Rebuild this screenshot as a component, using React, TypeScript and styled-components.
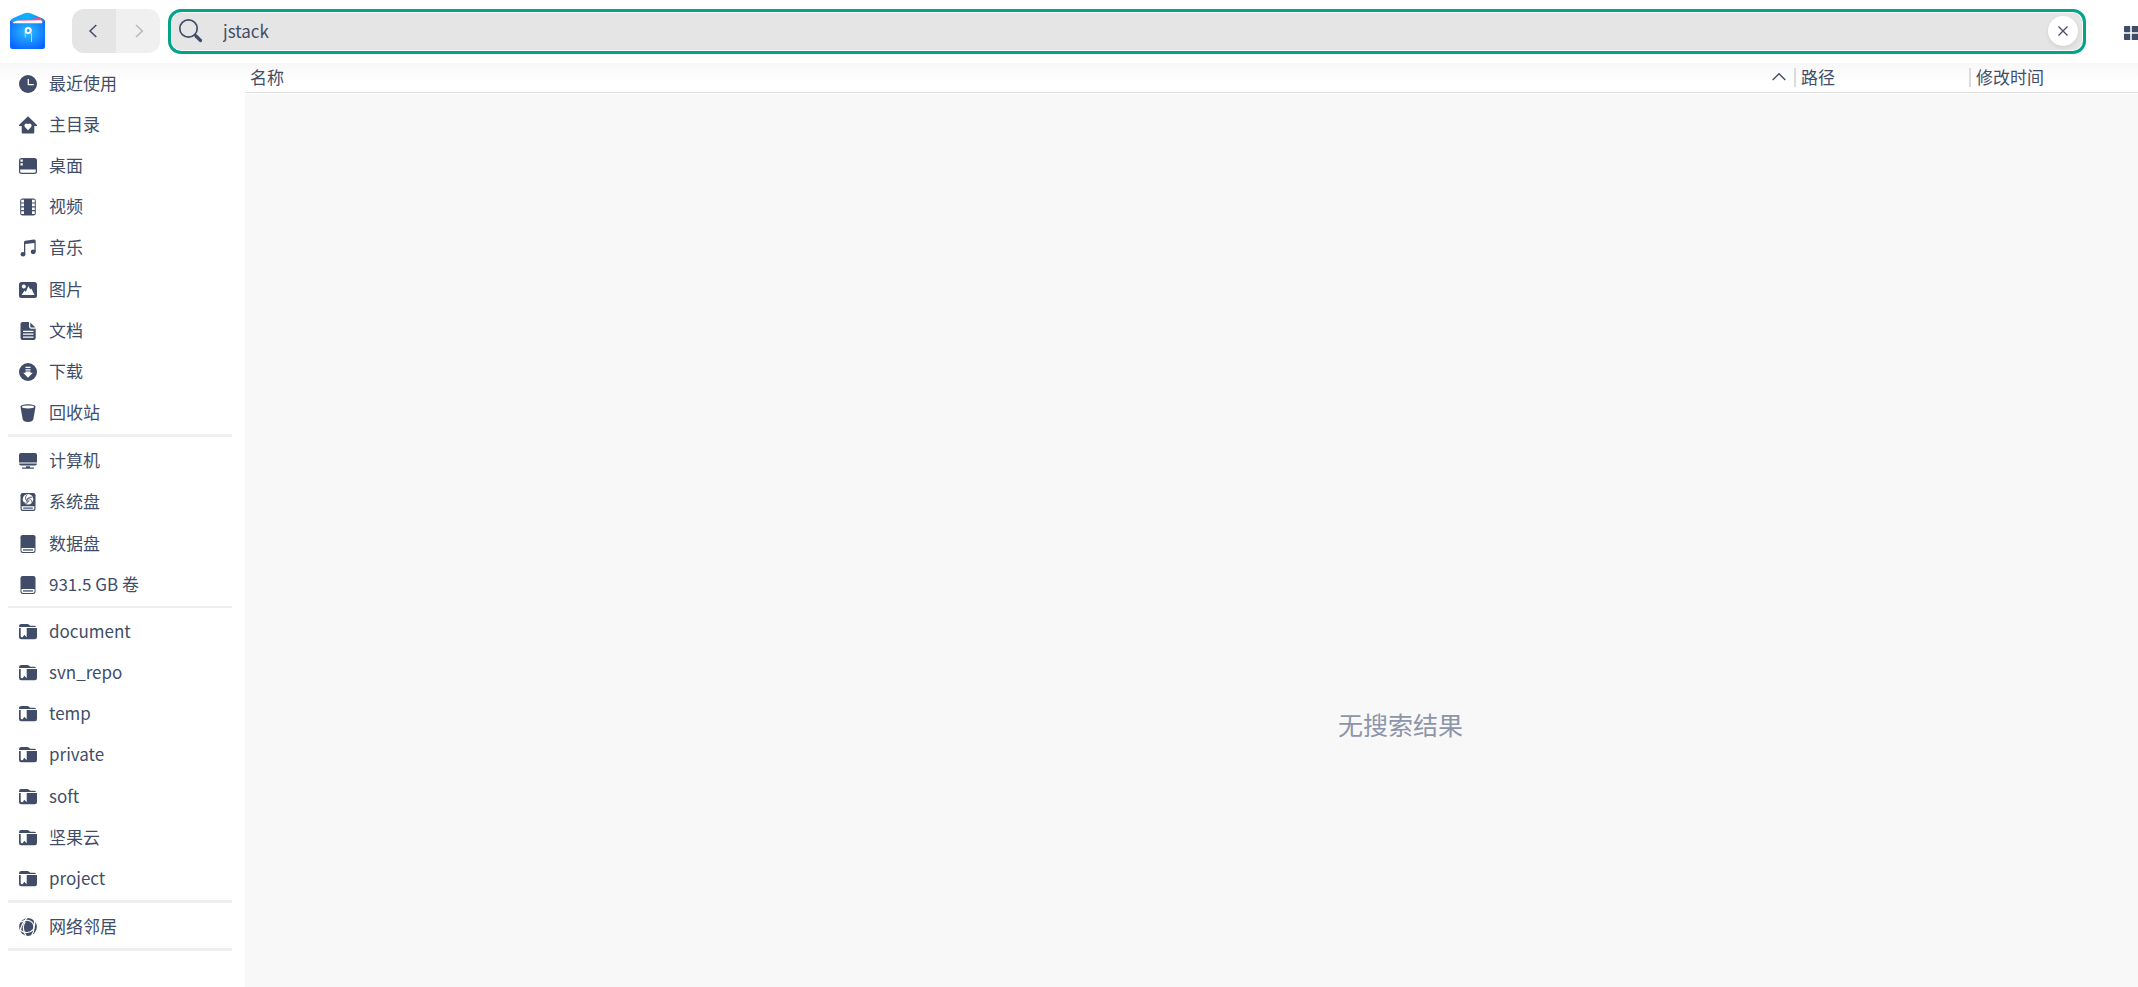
import React from "react";
import styled, { createGlobalStyle } from "styled-components";

const ink = "#414d68";
const uiFont = '"Noto Sans CJK SC", "Noto Sans", sans-serif';

const GlobalStyle = createGlobalStyle`
  * { box-sizing: border-box; }
  body {
    margin: 0;
    background: #fff;
    color: ${ink};
    font-family: ${uiFont};
    font-size: 17px;
    line-height: 24px;
    overflow: hidden;
  }
  button, input { font: inherit; color: inherit; }
`;

const Window = styled.div`
  display: flex;
  flex-direction: column;
  height: 100vh;
  overflow: hidden;
`;

const TitleBar = styled.header`
  display: flex;
  flex: none;
  align-items: center;
  height: 63px;
  padding: 0 0 1px 9px;
`;

const NavGroup = styled.nav`
  display: flex;
  flex: none;
  height: 44px;
  margin: 0 8px 0 26px;
  border-radius: 12px;
  overflow: hidden;
`;

const NavButton = styled.button`
  display: flex;
  align-items: center;
  justify-content: center;
  width: 44px;
  padding: 0 2px 0 0;
  border: 0;
  background: #e5e5e5;
  color: ${ink};
  &:disabled {
    padding: 0 0 0 2px;
    background: #f0f0f0;
    color: #b3b8c3;
  }
`;

const SearchBox = styled.form`
  display: flex;
  flex: 1;
  align-items: center;
  gap: 19px;
  height: 45px;
  margin-right: 38px;
  padding: 0 5px 0 7px;
  border: 3px solid #00a489;
  border-radius: 13px;
  background: #e5e5e5;
  box-shadow: inset 0 0 0 1px #fafafa;
`;

const SearchInput = styled.input`
  flex: 1;
  min-width: 0;
  padding: 0;
  border: 0;
  outline: 0;
  background: transparent;
`;

const ClearButton = styled.button`
  display: flex;
  align-items: center;
  justify-content: center;
  width: 30px;
  height: 30px;
  padding: 0;
  border: 0;
  border-radius: 50%;
  background: #fff;
  box-shadow: 0 2px 4px rgba(0, 0, 0, 0.09);
`;

const ViewButton = styled.button`
  display: flex;
  flex: none;
  width: 14px;
  padding: 4px 0 0;
  border: 0;
  background: none;
  overflow: hidden;
`;

const Body = styled.div`
  display: flex;
  flex: 1;
  min-height: 0;
  background: linear-gradient(#f7f7f7, #fff 18px);
`;

const Sidebar = styled.aside`
  display: flex;
  flex: none;
  flex-direction: column;
  gap: 3px;
  width: 245px;
  overflow: hidden;
`;

const Group = styled.ul<{ $height: number; $thin?: boolean }>`
  display: grid;
  flex: none;
  grid-auto-rows: 1fr;
  list-style: none;
  height: ${(p) => p.$height}px;
  margin: 0 13px 0 8px;
  padding: 0;
  border-bottom: ${(p) => (p.$thin ? 2 : 3)}px solid #efefef;
`;

const Place = styled.a`
  display: flex;
  align-items: center;
  gap: 12px;
  height: 100%;
  padding-left: 11px;
  color: inherit;
  text-decoration: none;
  white-space: nowrap;
`;

const PlaceLabel = styled.span`
  padding-bottom: 2px;
`;

const Main = styled.main`
  display: flex;
  flex: 1;
  flex-direction: column;
  min-width: 0;
`;

const ColumnBar = styled.div`
  display: flex;
  flex: none;
  align-items: center;
  height: 30px;
  border-bottom: 1px solid #dfdfdf;
  margin-bottom: 1px;
`;

const Column = styled.button<{ $width?: number }>`
  display: flex;
  flex: ${(p) => (p.$width ? `0 0 ${p.$width}px` : "1")};
  align-items: center;
  justify-content: space-between;
  height: 19px;
  padding: 0 8px 2px 5px;
  border: 0;
  border-left: ${(p) => (p.$width ? "2px solid #dcdcdc" : "0")};
  background: none;
  text-align: left;
`;

const Results = styled.section`
  display: flex;
  flex: 1;
  align-items: center;
  justify-content: center;
  padding: 366px 0 0 418px;
  background: #f8f8f8;
  color: #8d96a9;
  font-size: 25px;
  line-height: 36px;
`;

const Glyph = ({ children }: { children: React.ReactNode }) => (
  <svg width="18" height="18" viewBox="0 0 18 18" fill={ink} aria-hidden="true">
    {children}
  </svg>
);

const icons = {
  recent: (
    <Glyph>
      <circle cx="9" cy="9" r="9" />
      <path d="M9.300 4v5.700h5.500" fill="none" stroke="#fff" strokeWidth="1.300" />
    </Glyph>
  ),
  home: (
    <Glyph>
      <path d="M9 .3 18 9v1h-2.700v6.600a1 1 0 0 1-1 1H3.700a1 1 0 0 1-1-1V10H0V9z" />
      <path d="M9 14.200 5.900 11a2 2 0 0 1 3.100-2.700A2 2 0 0 1 12.100 11z" fill="#fff" />
    </Glyph>
  ),
  desktop: (
    <Glyph>
      <rect y="1" width="18" height="16" rx="2.500" />
      <path d="M1.200 12.600h15.600v1.800a1.400 1.400 0 0 1-1.400 1.400H2.600a1.400 1.400 0 0 1-1.400-1.400z" fill="#fff" />
      <path d="M1.400 2.600h2.400v2.200H1.400zM1.400 6.200h2.400v2.200H1.400z" fill="#fff" />
    </Glyph>
  ),
  video: (
    <Glyph>
      <rect x="1.200" y=".5" width="15.600" height="17" rx="2.200" />
      <path
        d="M2.200 1.800h2.800v2.600H2.200zM2.200 5.600h2.800v2.600H2.200zM2.200 9.400h2.800V12H2.200zM2.200 13.200h2.800v2.800H2.200zM13 1.800h2.800v2.600H13zM13 5.600h2.800v2.600H13zM13 9.400h2.800V12H13zM13 13.200h2.800v2.800H13z"
        fill="#fff"
      />
    </Glyph>
  ),
  music: (
    <Glyph>
      <path d="M5 15V3.200A1.500 1.500 0 0 1 6.300 1.700l8.700-1.200a1.500 1.500 0 0 1 1.700 1.500V13h-1.300V4L6.300 5v10z" />
      <ellipse cx="4" cy="15.200" rx="2.400" ry="2.300" />
      <ellipse cx="14.200" cy="12.800" rx="2.500" ry="2.400" />
    </Glyph>
  ),
  picture: (
    <Glyph>
      <rect y="1" width="18" height="16" rx="2.500" />
      <circle cx="4.800" cy="5.600" r="2" fill="#fff" />
      <path d="M2.600 14 5.600 9.600l1.300 1.300L9.300 5l2 3.600 1-1.100L15.600 14z" fill="#fff" />
    </Glyph>
  ),
  text: (
    <Glyph>
      <path d="M3.500 0H10v4.600A2 2 0 0 0 12 6.700h4.700V16a2 2 0 0 1-2 2H3.500a2 2 0 0 1-2-2V2a2 2 0 0 1 2-2z" />
      <path d="M11.300.4 16.400 5.500H12.200a.9.9 0 0 1-.9-.9z" />
      <path d="M4 9.300h10.500M4 12.200h10.500M4 15.100h10.500" stroke="#fff" strokeWidth="1.200" />
    </Glyph>
  ),
  download: (
    <Glyph>
      <circle cx="9" cy="9" r="9" />
      <path d="M6.500 3.800h5v1.300h-5zM6.500 6.200h5v1.300h-5zM6.500 8.500h5v1.200h2.300L9 14.700 4.200 9.700h2.300z" fill="#fff" />
    </Glyph>
  ),
  trash: (
    <Glyph>
      <path d="M1.500 2.800C1.500 1.200 4.800.2 9 .2s7.500 1 7.500 2.600L14.400 15c-.3 2-2.600 3-5.400 3s-5.100-1-5.400-3z" />
      <ellipse cx="9" cy="2.900" rx="6.200" ry="1.500" fill="#fff" />
    </Glyph>
  ),
  computer: (
    <Glyph>
      <path d="M2 1h14a2 2 0 0 1 2 2v7.500H0V3a2 2 0 0 1 2-2z" />
      <path d="M0 11.500h18a2 2 0 0 1-2 2H2a2 2 0 0 1-2-2z" />
      <path d="M7 14.300h4v1.200h4v1.300H3v-1.300h4z" />
    </Glyph>
  ),
  system: (
    <Glyph>
      <rect x="1.500" width="15" height="18" rx="2.200" />
      <circle cx="9" cy="6.300" r="5.300" fill="#fff" />
      <path
        d="M8.500 1.500C5.800 3.500 6 6.700 8.600 8.400M13.200 4.300C9.600 3.600 7.600 5.900 8 9M12.900 9.500C12.900 6.200 10.500 5 7.900 6.100M5 9.800c2.600 1.200 5-.4 5-3.100"
        fill="none"
        stroke={ink}
        strokeWidth=".9"
      />
      <path d="M2.700 13.300h12.600v2.300a1.200 1.200 0 0 1-1.200 1.200H3.900a1.200 1.200 0 0 1-1.200-1.200z" fill="#fff" />
      <path d="M4.200 14.500h9.600v1.200H4.200z" />
    </Glyph>
  ),
  disk: (
    <Glyph>
      <rect x="1.500" width="15" height="18" rx="2.200" />
      <path d="M2.500 12.900h13v2.700a1.300 1.300 0 0 1-1.300 1.300H3.800a1.300 1.300 0 0 1-1.300-1.300z" fill="#fff" />
      <path d="M4 14.300h10v1.300H4z" />
    </Glyph>
  ),
  folder: (
    <Glyph>
      <path d="M0 4V3.300A2.300 2.300 0 0 1 2.300 1h6.200a2 2 0 0 1 1.500.7l1.300 1.100H15A2.500 2.500 0 0 1 17.200 4z" />
      <path d="M0 5h18v9A2.300 2.300 0 0 1 15.700 16.300H2.300A2.300 2.300 0 0 1 0 14z" />
      <path d="M1.700 5h6v9.300L5.300 11.800 3.600 14.300H3a1.300 1.300 0 0 1-1.300-1.300z" fill="#fff" />
    </Glyph>
  ),
  network: (
    <Glyph>
      <circle cx="9" cy="9" r="8.900" />
      <g fill="none" stroke="#fff" strokeWidth="1.200">
        <path d="M8 0C4 4 2.500 7 1.200 12.500" />
        <path d="M2 4C7 1.200 11.500 2 13.700 5c2 3.200 1.300 8.500-1.400 13" />
        <path d="M6.300 3.500C3.300 8 4 13 7 18" />
        <path d="M.8 12c5 3.800 10.500 3 13-.2 1.800-2.500 2.600-5.300 1.400-9.800" />
      </g>
    </Glyph>
  ),
};

type IconName = keyof typeof icons;

type PlaceGroup = {
  height: number;
  thin?: boolean;
  places: { label: string; icon: IconName }[];
};

const groups: PlaceGroup[] = [
  {
    height: 374,
    places: [
      { label: "最近使用", icon: "recent" },
      { label: "主目录", icon: "home" },
      { label: "桌面", icon: "desktop" },
      { label: "视频", icon: "video" },
      { label: "音乐", icon: "music" },
      { label: "图片", icon: "picture" },
      { label: "文档", icon: "text" },
      { label: "下载", icon: "download" },
      { label: "回收站", icon: "trash" },
    ],
  },
  {
    height: 168,
    thin: true,
    places: [
      { label: "计算机", icon: "computer" },
      { label: "系统盘", icon: "system" },
      { label: "数据盘", icon: "disk" },
      { label: "931.5 GB 卷", icon: "disk" },
    ],
  },
  {
    height: 292,
    places: [
      { label: "document", icon: "folder" },
      { label: "svn_repo", icon: "folder" },
      { label: "temp", icon: "folder" },
      { label: "private", icon: "folder" },
      { label: "soft", icon: "folder" },
      { label: "坚果云", icon: "folder" },
      { label: "project", icon: "folder" },
    ],
  },
  { height: 45, places: [{ label: "网络邻居", icon: "network" }] },
];

const AppLogo = () => (
  <svg width="37" height="38" viewBox="0 0 37 38" aria-hidden="true">
    <defs>
      <radialGradient id="pouch" cx=".5" cy=".4" r=".65">
        <stop offset="0" stopColor="#2cc0ff" />
        <stop offset="1" stopColor="#0a66ff" />
      </radialGradient>
      <linearGradient id="flap" x1="0" x2="1">
        <stop offset="0" stopColor="#0f9bff" />
        <stop offset=".5" stopColor="#0fb2ff" />
        <stop offset="1" stopColor="#0a86f0" />
      </linearGradient>
    </defs>
    <path d="M1 9.500Q1.500 7.300 5 5.800L15 1.500Q18.500 0 22 1.500L32 5.800Q36 7.300 36 9.500V15H1z" fill="url(#flap)" />
    <path d="M3 11.500V9.500L29 6Q33 5.600 33.500 8.500V12z" fill="#f4527f" />
    <path d="M4 12V10.500l3-1.800L32 8.300l1.500 2V12z" fill="#fff" />
    <path d="M1 8.500 4.500 11.300h28L36 8.500V34.500q0 2.500-2.500 2.500H3.500Q1 37 1 34.500z" fill="url(#pouch)" />
    <path d="M16.200 20v5.500M22.500 21v9" stroke="#9be0ff" strokeWidth="1" />
    <circle cx="19.200" cy="18.600" r="2.500" fill="#169cff" stroke="#fff" strokeWidth="2" />
  </svg>
);

export default function App() {
  return (
    <Window>
      <GlobalStyle />
      <TitleBar>
        <AppLogo />
        <NavGroup aria-label="导航">
          <NavButton type="button" aria-label="后退">
            <svg width="10" height="14" viewBox="0 0 10 14" fill="none" stroke="currentColor" strokeWidth="1.500">
              <path d="M8.300 1 2 7l6.300 6" />
            </svg>
          </NavButton>
          <NavButton type="button" aria-label="前进" disabled>
            <svg width="10" height="14" viewBox="0 0 10 14" fill="none" stroke="currentColor" strokeWidth="1.500">
              <path d="M2 1l6.300 6L2 13" />
            </svg>
          </NavButton>
        </NavGroup>
        <SearchBox role="search" onSubmit={(e) => e.preventDefault()}>
          <svg width="26" height="26" viewBox="0 0 26 26" fill="none" stroke={ink} aria-hidden="true">
            <circle cx="10.500" cy="10.500" r="8.700" strokeWidth="1.700" />
            <path d="m16.500 16.500 1.600 1.600" strokeWidth="2" />
            <path d="m18 18 4.500 4.500" strokeWidth="3.200" strokeLinecap="round" />
          </svg>
          <SearchInput aria-label="搜索" defaultValue="jstack" />
          <ClearButton type="reset" aria-label="清除">
            <svg width="10" height="10" viewBox="0 0 10 10" stroke={ink} strokeWidth="1.300">
              <path d="m.5.5 9 9M9.500.5l-9 9" />
            </svg>
          </ClearButton>
        </SearchBox>
        <ViewButton type="button" aria-label="图标视图">
          <Glyph>
            <path d="M1 0h6a1 1 0 0 1 1 1v7H1a1 1 0 0 1-1-1V1a1 1 0 0 1 1-1zM10 0h8v8h-8zM0 10h8v8H1a1 1 0 0 1-1-1zM10 10h8v8h-8z" />
          </Glyph>
        </ViewButton>
      </TitleBar>
      <Body>
        <Sidebar>
          {groups.map((group) => (
            <Group key={group.places[0].label} $height={group.height} $thin={group.thin}>
              {group.places.map((place) => (
                <li key={place.label}>
                  <Place href="#">
                    {icons[place.icon]}
                    <PlaceLabel>{place.label}</PlaceLabel>
                  </Place>
                </li>
              ))}
            </Group>
          ))}
        </Sidebar>
        <Main>
          <ColumnBar>
            <Column type="button">
              名称
              <svg width="14" height="9" viewBox="0 0 14 9" fill="none" stroke={ink} strokeWidth="1.400" aria-hidden="true">
                <path d="m.7 8 6.300-6.300L13.300 8" />
              </svg>
            </Column>
            <Column type="button" $width={175}>
              路径
            </Column>
            <Column type="button" $width={169}>
              修改时间
            </Column>
          </ColumnBar>
          <Results>无搜索结果</Results>
        </Main>
      </Body>
    </Window>
  );
}
